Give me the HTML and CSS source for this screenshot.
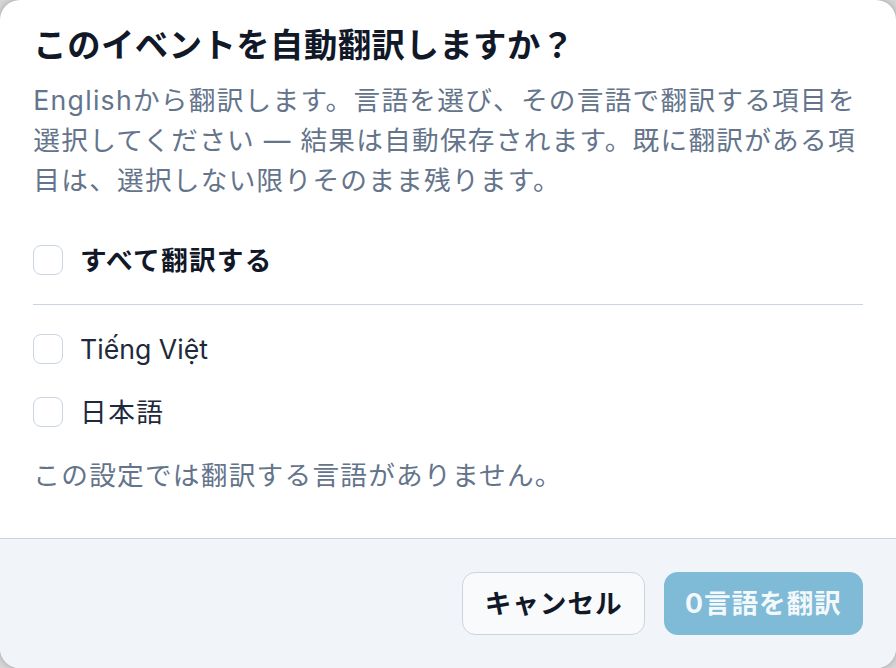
FILE: index.html
```html
<!DOCTYPE html>
<html lang="ja">
<head>
<meta charset="utf-8">
<title>自動翻訳</title>
<link rel="stylesheet" href="styles.css">
</head>
<body>
<div class="dialog">
  <div class="dialog-body">
    <h2 class="title">このイベントを自動翻訳しますか？</h2>
    <p class="desc">Englishから翻訳します。言語を選び、その言語で翻訳する項目を選択してください — 結果は自動保存されます。既に翻訳がある項目は、選択しない限りそのまま残ります。</p>
    <div class="options">
      <label class="row row-all"><span class="box"></span><span class="label label-strong">すべて翻訳する</span></label>
      <hr class="divider">
      <label class="row"><span class="box"></span><span class="label label-latin">Tiếng Việt</span></label>
      <label class="row"><span class="box"></span><span class="label">日本語</span></label>
    </div>
    <p class="note">この設定では翻訳する言語がありません。</p>
  </div>
  <div class="dialog-footer">
    <button class="btn btn-cancel" type="button">キャンセル</button>
    <button class="btn btn-primary" type="button" disabled>0言語を翻訳</button>
  </div>
</div>
</body>
</html>
```
FILE: styles.css
```css
html, body {
  margin: 0;
  height: 100%;
}
body {
  background: #d6d6d6;
  font-family: "Inter", "Noto Sans CJK JP", "Noto Sans", sans-serif;
}
.dialog {
  height: 668px;
  box-sizing: border-box;
  background: #ffffff;
  border-radius: 20px;
  overflow: hidden;
  display: flex;
  flex-direction: column;
  box-shadow: 0 0 6px rgba(0,0,0,0.25);
}
.dialog-body {
  flex: 1;
  padding: 22px 33.33px 0;
}
.title {
  margin: 0;
  font-size: 33.33px;
  line-height: 46.67px;
  font-weight: 700;
  letter-spacing: 0.5px;
  color: #111827;
}
.desc {
  margin: 11.33px 0 0;
  font-size: 26.67px;
  line-height: 40px;
  letter-spacing: 1.25px;
  color: #64748b;
}
.options {
  margin-top: 40px;
  display: flex;
  flex-direction: column;
}
.row {
  display: flex;
  align-items: center;
  gap: 16.67px;
  height: 40px;
}
.row + .row {
  margin-top: 23px;
}
.box {
  width: 30px;
  height: 30px;
  box-sizing: border-box;
  border: 1.67px solid #cbd5e1;
  border-radius: 8px;
  background: #ffffff;
  flex: none;
}
.label {
  font-size: 26.67px;
  line-height: 40px;
  color: #1e293b;
  font-weight: 400;
  letter-spacing: 1.5px;
}
.label-latin {
  letter-spacing: 0;
}
.label-strong {
  font-weight: 700;
  color: #111827;
  letter-spacing: 1.3px;
}
.divider {
  margin: 24px 0 24.33px;
  border: 0;
  border-top: 1.67px solid #cbd5e1;
  height: 0;
}
.note {
  margin: 23px 0 0;
  font-size: 26.67px;
  line-height: 40px;
  letter-spacing: 1.25px;
  color: #64748b;
}
.dialog-footer {
  flex: none;
  background: #f1f5f9;
  border-top: 1.67px solid #cbd5e1;
  padding: 33px 33.33px;
  display: flex;
  justify-content: flex-end;
  gap: 19px;
}
.btn {
  font-family: inherit;
  font-size: 26.67px;
  line-height: 40px;
  font-weight: 700;
  height: 63.33px;
  box-sizing: border-box;
  padding: 10px 21.5px;
  border-radius: 13.33px;
  border: 1.67px solid transparent;
  letter-spacing: 0.9px;
}
.btn-cancel {
  background: #f8fafc;
  border-color: #cbd5e1;
  color: #111827;
}
.btn-primary {
  padding: 10px 20px;
  background: #7fbad7;
  border-color: #7fbad7;
  color: #f3f8fb;
}
```
